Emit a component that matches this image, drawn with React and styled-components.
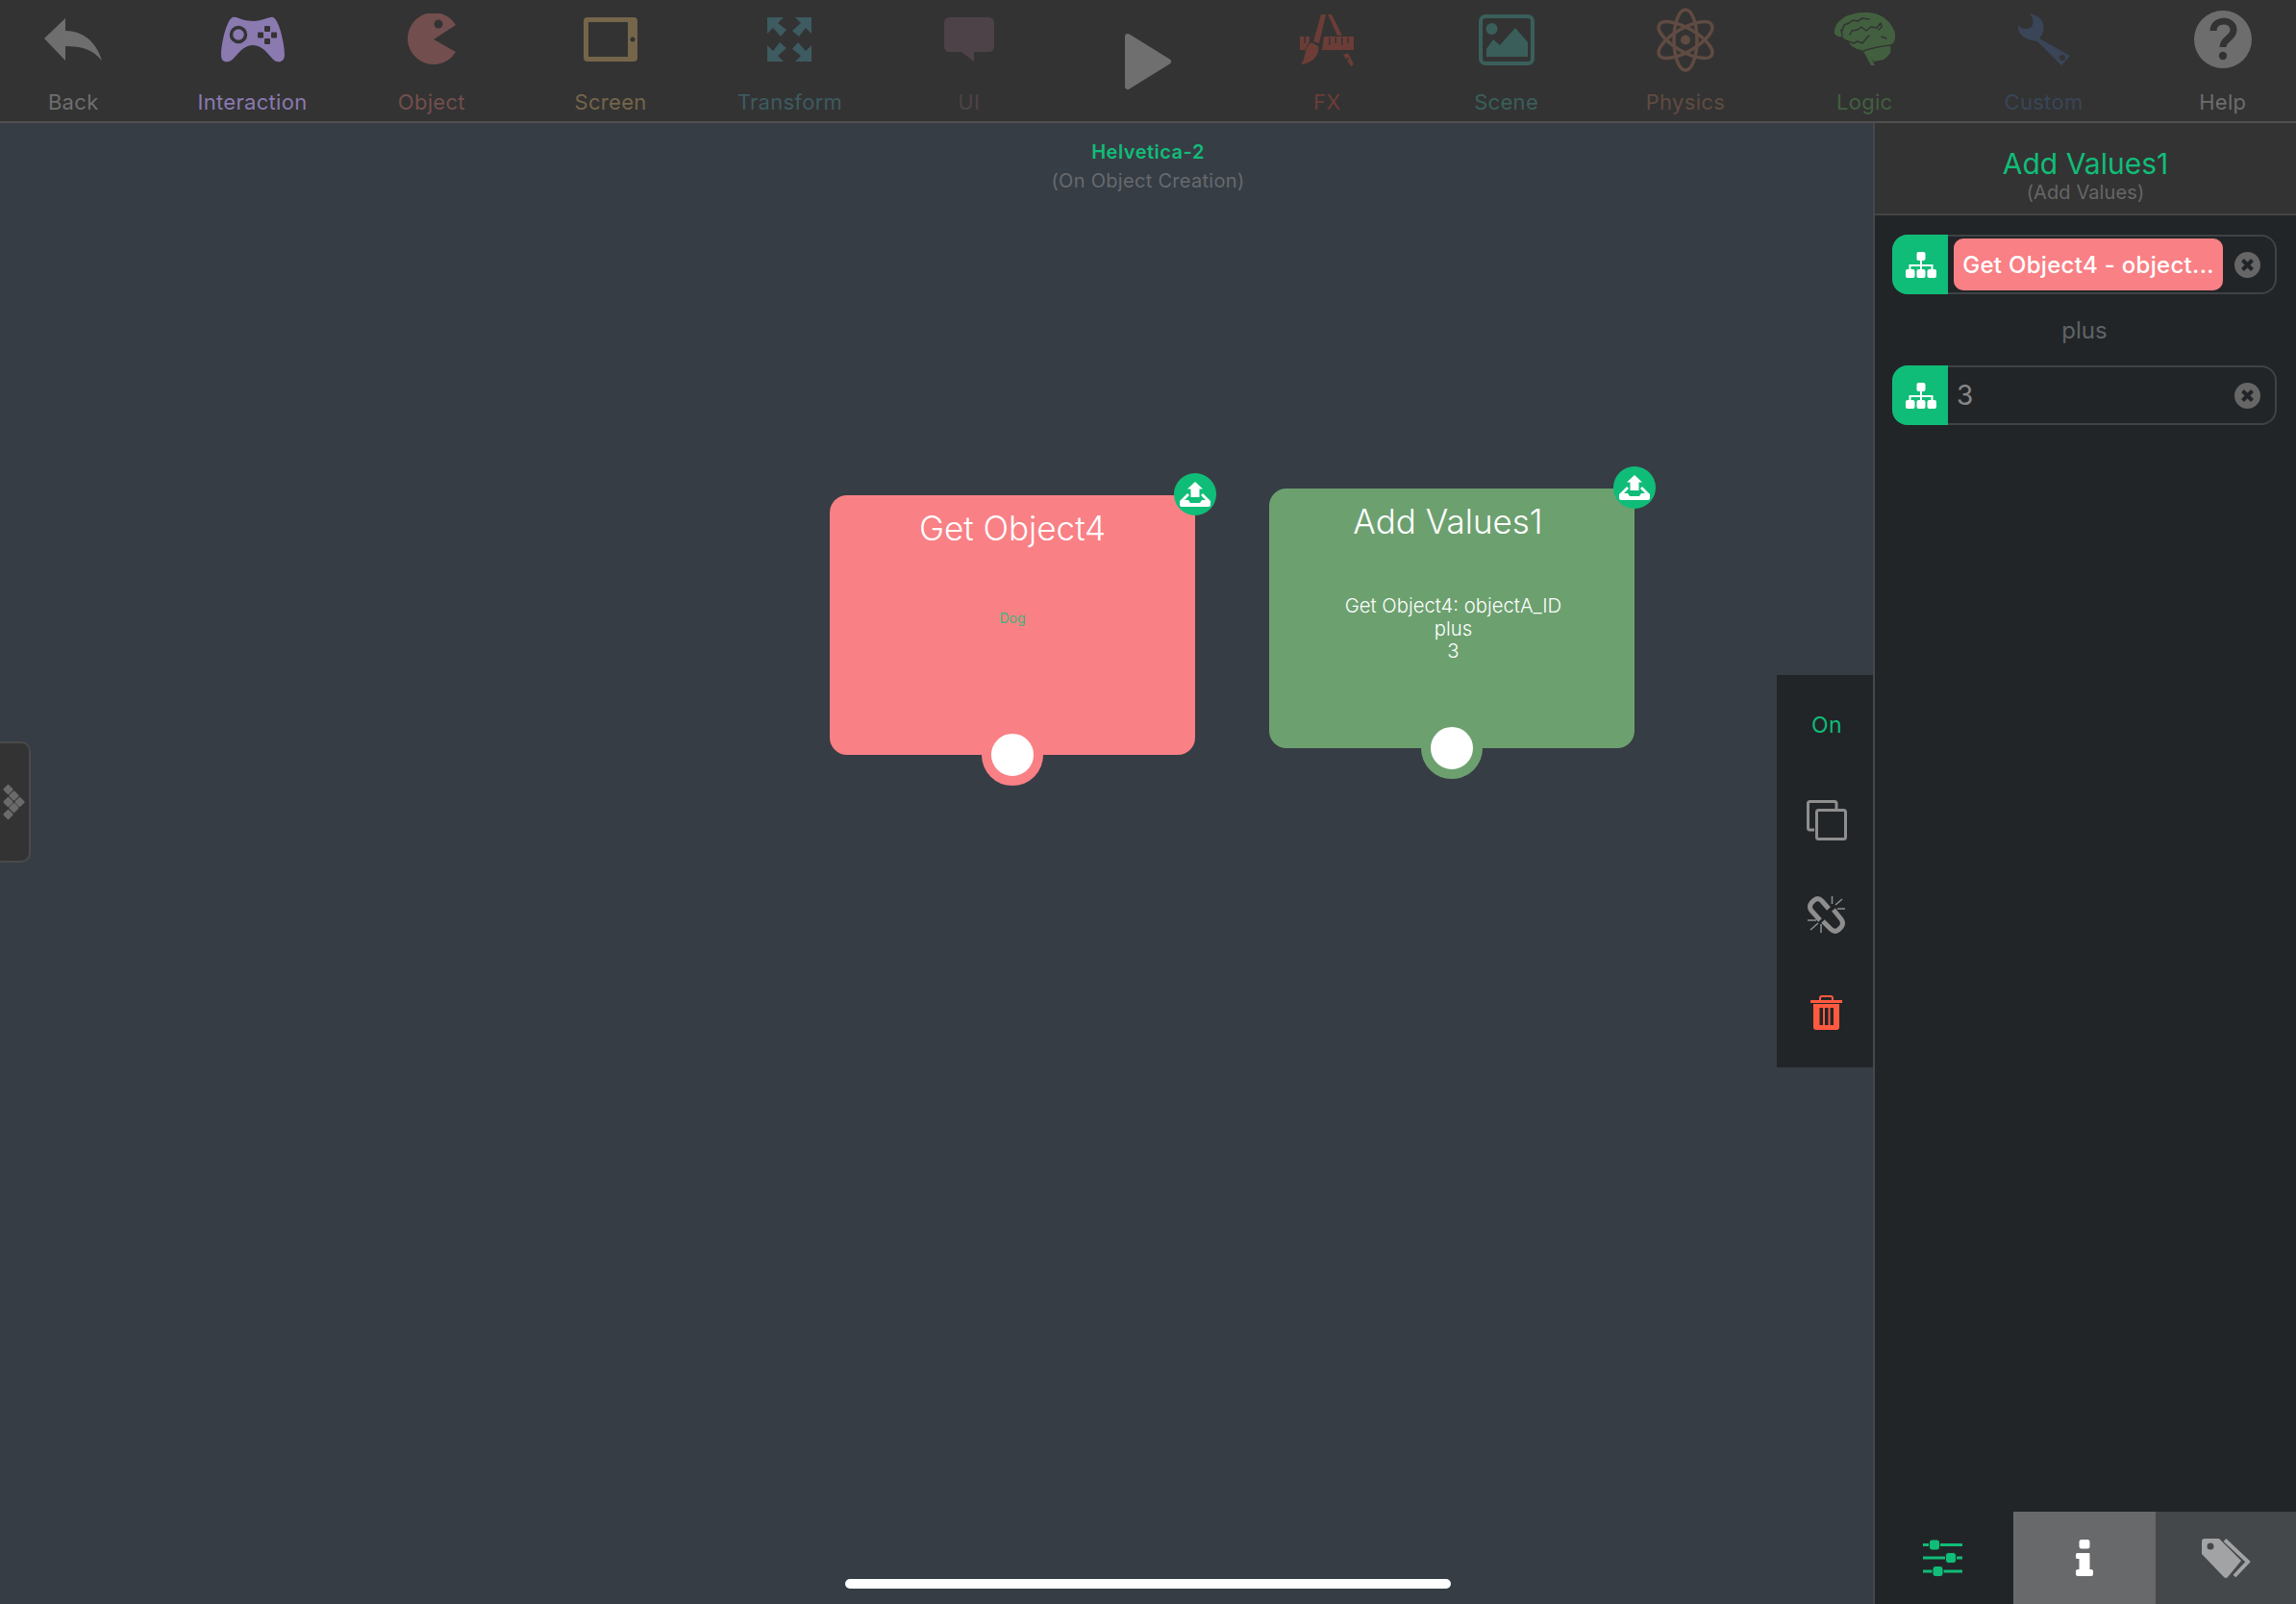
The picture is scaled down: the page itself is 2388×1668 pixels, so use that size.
import React from 'react';
import styled, { createGlobalStyle } from 'styled-components';

const GREEN = '#10bd78';
const PINK = '#f98085';
const NODE_GREEN = '#6ca06f';
const TOOL_BG = '#333333';
const PANEL_BG = '#222528';

const GlobalStyle = createGlobalStyle`
  html, body {
    margin: 0;
    padding: 0;
    background: #373d45;
  }
  * {
    box-sizing: border-box;
  }
`;

const BackIcon = ({ color }) => (
  <svg width="60" height="44" viewBox="0 0 60 44">
    <path fill={color} d="M0 21 L22 0 V13 C40 13 54 24 60 44 C50 32 38 29 22 29 V44 Z" />
  </svg>
);

const GamepadIcon = ({ color }) => (
  <svg width="66" height="48" viewBox="0 0 66 48">
    <path
      fill={color}
      d="M12 1 C16 0 22 5 33 5 C44 5 50 0 54 1 C60 3 66 28 66 40 C66 46 62 48 58 47 C52 46 46 30 33 30 C20 30 14 46 8 47 C3 48 0 46 0 40 C0 28 6 3 12 1 Z"
    />
    <circle cx="18" cy="19" r="7.5" fill={color} stroke={TOOL_BG} strokeWidth="3.5" />
    <rect x="45" y="10" width="6" height="6" rx="1" fill={TOOL_BG} />
    <rect x="38" y="16.5" width="6" height="6" rx="1" fill={TOOL_BG} />
    <rect x="52" y="16.5" width="6" height="6" rx="1" fill={TOOL_BG} />
    <rect x="45" y="23" width="6" height="6" rx="1" fill={TOOL_BG} />
  </svg>
);

const PacmanIcon = ({ color }) => (
  <svg width="50" height="54" viewBox="0 0 50 54">
    <path fill={color} d="M50 12 L27 27 L50 40 A27 27 0 1 1 50 12 Z" />
    <circle cx="32" cy="11" r="4.5" fill={TOOL_BG} />
  </svg>
);

const TabletIcon = ({ color }) => (
  <svg width="56" height="46" viewBox="0 0 56 46">
    <rect width="56" height="46" rx="4" fill={color} />
    <rect x="5" y="5" width="41" height="36" fill={TOOL_BG} />
    <circle cx="51" cy="23" r="2.5" fill={TOOL_BG} />
  </svg>
);

const TransformIcon = ({ color }) => (
  <svg width="48" height="48" viewBox="0 0 48 48">
    {[0, 90, 180, 270].map((angle) => (
      <path
        key={angle}
        fill={color}
        transform={`rotate(${angle} 24 24)`}
        d="M30 1 H47 V18 L41 12 L34 21 L27 15 L36 7 Z"
      />
    ))}
  </svg>
);

const BubbleIcon = ({ color }) => (
  <svg width="52" height="46" viewBox="0 0 52 46">
    <path
      fill={color}
      d="M6 0 H46 Q52 0 52 6 V30 Q52 36 46 36 H31 V46 L18 36 H6 Q0 36 0 30 V6 Q0 0 6 0 Z"
    />
  </svg>
);

const PlayIcon = ({ color }) => (
  <svg width="48" height="58" viewBox="0 0 48 58">
    <path fill={color} stroke={color} strokeWidth="6" strokeLinejoin="round" d="M3 3 L45 29 L3 55 Z" />
  </svg>
);

const FxIcon = ({ color }) => (
  <svg width="56" height="55" viewBox="0 0 56 55">
    <g fill={color}>
      <path d="M22 1 H27 L20 31 L14 29 Z" />
      <path d="M12 30 L19 34 C21 42 14 52 1 53 C7 47 3 36 12 30 Z" />
      <path d="M0 24 H10 V29 L5 38 H0 Z" />
      <path d="M25 24 H56 V38 H23 Z" />
      <path d="M29 1 H33 L44 23 H39 Z" />
      <path d="M45 43 L50 41 L56 53 L53 55 Z" />
    </g>
    <g fill={TOOL_BG}>
      <rect x="4.5" y="24" width="1.5" height="7" />
      <rect x="30" y="25" width="1.5" height="8" />
      <rect x="36.5" y="25" width="1.5" height="6" />
      <rect x="43" y="25" width="1.5" height="8" />
      <rect x="49.5" y="25" width="1.5" height="6" />
      <circle cx="49.5" cy="47.5" r="1.3" />
    </g>
  </svg>
);

const SceneIcon = ({ color }) => (
  <svg width="58" height="53" viewBox="0 0 58 53">
    <rect x="2" y="2" width="54" height="49" rx="5" fill="none" stroke={color} strokeWidth="4" />
    <circle cx="13.5" cy="15" r="6" fill={color} />
    <path fill={color} d="M8 44 V36 L15 26 L22 32 L38 14 L51 29 V44 Z" />
  </svg>
);

const AtomIcon = ({ color }) => (
  <svg width="60" height="67" viewBox="0 0 60 67">
    <circle cx="30" cy="33.5" r="5" fill={color} />
    {[0, 60, -60].map((angle) => (
      <ellipse
        key={angle}
        cx="30"
        cy="33.5"
        rx="12"
        ry="31.5"
        fill="none"
        stroke={color}
        strokeWidth="3.5"
        transform={`rotate(${angle} 30 33.5)`}
      />
    ))}
  </svg>
);

const BrainIcon = ({ color }) => (
  <svg width="64" height="56" viewBox="0 0 64 56">
    <path
      fill={color}
      d="M1 19 Q2 12 6 9 Q12 3 19 2 Q28 -1 37 0 Q46 1 52 5 Q58 9 61 15 Q65 21 64 27 Q63 32 59 34 Q60 39 59 42 Q56 47 52 49 L42 51 L39 47 L43 55 H39 L32 42 L29 39 Q23 38 19 35 Q16 32 15 29 Q11 28 9 25 Q5 26 3 24 Q0 22 1 19 Z"
    />
    <g fill="none" stroke={TOOL_BG} strokeWidth="1.5" strokeLinecap="round" strokeLinejoin="round">
      <path d="M9 19 L11 13 L16 11 L20 8 L25 9 L30 6 L37 7" />
      <path d="M17 23 L19 19 L25 18 L29 15 L34 19 L39 15 L45 16 L49 11 L50 15 L47 18" />
      <path d="M8 18 L9 24" />
      <path d="M15 30 L21 32 L25 30 L30 32 L34 27 L37 24" />
      <path d="M50 25 L55 27" />
      <path d="M31 40 Q42 36 59 34" />
    </g>
  </svg>
);

const WrenchIcon = ({ color }) => (
  <svg width="55" height="54" viewBox="0 0 55 54">
    <path
      fill={color}
      d="M13 0 Q24 2 27 11 Q29 19 23 26 L55 44 L46 54 L21 29 Q12 28 6 24 Q0 19 1 12 Q4 16 8 16 Q14 16 16 12 Q18 6 13 0 Z"
    />
    <circle cx="47" cy="46" r="3" fill={TOOL_BG} />
  </svg>
);

const HelpIcon = ({ color }) => (
  <svg width="60" height="60" viewBox="0 0 60 60">
    <circle cx="30" cy="30" r="30" fill={color} />
    <path
      d="M20 21 C20 8 41 8 41 20 C41 29 30 29 30 38"
      fill="none"
      stroke={TOOL_BG}
      strokeWidth="7"
    />
    <circle cx="30" cy="47" r="4.2" fill={TOOL_BG} />
  </svg>
);

const SitemapIcon = () => (
  <svg width="32" height="27" viewBox="0 0 32 27">
    <g fill="#fff">
      <rect x="11.5" y="0" width="9" height="9" rx="2" />
      <rect x="0" y="18" width="9.5" height="9" rx="2" />
      <rect x="11.5" y="18" width="9" height="9" rx="2" />
      <rect x="22.5" y="18" width="9.5" height="9" rx="2" />
    </g>
    <path d="M16 9 V18 M4.5 18 V14 H27.5 V18" fill="none" stroke="#fff" strokeWidth="2" />
  </svg>
);

const CloseIcon = () => (
  <svg width="27" height="27" viewBox="0 0 27 27">
    <circle cx="13.5" cy="13.5" r="13.5" fill="#666666" />
    <path d="M8.5 8.5 L18.5 18.5 M18.5 8.5 L8.5 18.5" stroke={PANEL_BG} strokeWidth="4" />
  </svg>
);

const UploadIcon = () => (
  <svg width="32" height="26" viewBox="0 0 32 26">
    <path fill="#fff" d="M16 0 L24 7.5 H20.5 V16 H11.5 V7.5 H8 Z" />
    <path
      fill="#fff"
      d="M8 12 L0 20 V24 Q0 26 2 26 H30 Q32 26 32 24 V20 L24 12 L22 14 L27 19 H23 L21 22 H11 L9 19 H5 L10 14 Z"
    />
  </svg>
);

const CopyIcon = () => (
  <svg width="42" height="42" viewBox="0 0 42 42">
    <g fill="none" stroke="#8e8e8e" strokeWidth="3">
      <path d="M8 31 H3.5 Q1.5 31 1.5 29 V3.5 Q1.5 1.5 3.5 1.5 H29 Q31 1.5 31 3.5 V9" />
      <rect x="10.5" y="10.5" width="30" height="30" rx="2" />
    </g>
  </svg>
);

const UnlinkIcon = () => (
  <svg width="40" height="39" viewBox="0 0 40 39">
    <g fill="none" stroke="#8e8e8e">
      <path strokeWidth="5" d="M22 13 L15 5 Q11 1 7 4 L4 7 Q1 11 4 15 L13 25" />
      <path strokeWidth="5" d="M16 26 L24 34 Q28 38 32 35 L35 32 Q38 28 35 24 L27 14" />
      <path
        strokeWidth="1.5"
        d="M25.5 0 V8 M36 3 L29 9 M39 13 H31 M0 25 H9 M3 35 L11 28 M14 29 V38"
      />
    </g>
  </svg>
);

const TrashIcon = () => (
  <svg width="33" height="36" viewBox="0 0 33 36">
    <path d="M10 6 V3 Q10 1 12 1 H21 Q23 1 23 3 V6" fill="none" stroke="#ff5a3f" strokeWidth="2" />
    <rect x="0" y="5" width="33" height="3" fill="#ff5a3f" />
    <path fill="#ff5a3f" d="M3 9 H30 V33 Q30 36 27 36 H6 Q3 36 3 33 Z" />
    <g fill={PANEL_BG}>
      <rect x="9.5" y="13" width="3.5" height="18" />
      <rect x="15" y="13" width="3.5" height="18" />
      <rect x="20.5" y="13" width="3.5" height="18" />
    </g>
  </svg>
);

const SlidersIcon = () => (
  <svg width="41" height="38" viewBox="0 0 41 38">
    <path d="M0 5.5 H41 M0 19 H41 M0 33 H41" stroke={GREEN} strokeWidth="3" />
    <g fill={GREEN} stroke={PANEL_BG} strokeWidth="1">
      <rect x="6.5" y="0" width="11" height="11" rx="3" />
      <rect x="23.5" y="13.5" width="11" height="11" rx="3" />
      <rect x="10" y="27.5" width="11" height="11" rx="3" />
    </g>
  </svg>
);

const InfoIcon = () => (
  <svg width="18" height="38" viewBox="0 0 18 38">
    <g fill="#fff">
      <rect x="3.5" y="0" width="11" height="9.5" rx="2.5" />
      <rect x="0" y="14" width="14" height="6" rx="1.5" />
      <rect x="3.5" y="14" width="11" height="24" rx="1" />
      <rect x="0" y="31" width="18" height="7" rx="2" />
    </g>
  </svg>
);

const TagsIcon = () => (
  <svg width="51" height="41" viewBox="0 0 51 41">
    <path
      fill="#a2a3a5"
      d="M0 3 Q0 0 3 0 H18 L41 23 L27 40 Q25 42 23 40 L0 16 Z"
    />
    <circle cx="9" cy="8" r="3.5" fill="#45484b" />
    <path d="M24 1.5 L48 24 L34 39" fill="none" stroke="#a2a3a5" strokeWidth="4" />
  </svg>
);

const GripIcon = () => (
  <svg width="24" height="38" viewBox="0 0 24 38">
    <g fill="#6a6a6a">
      {[
        [6.5, 6],
        [12.5, 12.5],
        [18.5, 19],
        [6.5, 19],
        [12.5, 25],
        [6.5, 32],
      ].map(([x, y]) => (
        <rect
          key={`${x}-${y}`}
          x={x - 4}
          y={y - 4}
          width="8"
          height="8"
          rx="1.5"
          transform={`rotate(45 ${x} ${y})`}
        />
      ))}
    </g>
  </svg>
);

const TOOLS = [
  { label: 'Back', color: '#6e6e6e', Icon: BackIcon },
  { label: 'Interaction', color: '#8a7ab0', Icon: GamepadIcon },
  { label: 'Object', color: '#734e4e', Icon: PacmanIcon },
  { label: 'Screen', color: '#75654a', Icon: TabletIcon },
  { label: 'Transform', color: '#3d5b60', Icon: TransformIcon },
  { label: 'UI', color: '#4d4247', Icon: BubbleIcon },
  { label: '', color: '#6f6f6f', Icon: PlayIcon },
  { label: 'FX', color: '#6b3d36', Icon: FxIcon },
  { label: 'Scene', color: '#3a5f5b', Icon: SceneIcon },
  { label: 'Physics', color: '#604b42', Icon: AtomIcon },
  { label: 'Logic', color: '#42603f', Icon: BrainIcon },
  { label: 'Custom', color: '#3a4558', Icon: WrenchIcon },
  { label: 'Help', color: '#6d6d6d', Icon: HelpIcon },
];

const App = () => (
  <Page>
    <GlobalStyle />
    <Toolbar>
      {TOOLS.map(({ label, color, Icon }) => (
        <ToolItem key={label || 'play'} $color={color}>
          <ToolIcon $play={!label}>
            <Icon color={color} />
          </ToolIcon>
          {label && <ToolLabel>{label}</ToolLabel>}
        </ToolItem>
      ))}
    </Toolbar>
    <Main>
      <Canvas>
        <SceneCaption>
          <SceneName>Helvetica-2</SceneName>
          <SceneEvent>(On Object Creation)</SceneEvent>
        </SceneCaption>

        <DrawerTab>
          <GripIcon />
        </DrawerTab>

        <Node $x={863} $y={387} $color={PINK}>
          <NodeTitle>Get Object4</NodeTitle>
          <NodeTarget>Dog</NodeTarget>
          <NodeBadge>
            <UploadIcon />
          </NodeBadge>
          <NodeKnob $color={PINK} />
        </Node>

        <Node $x={1320} $y={380} $color={NODE_GREEN}>
          <NodeTitle $shift={-8}>Add Values1</NodeTitle>
          <NodeBody>
            Get Object4: objectA_ID
            <br />
            plus
            <br />3
          </NodeBody>
          <NodeBadge>
            <UploadIcon />
          </NodeBadge>
          <NodeKnob $color={NODE_GREEN} />
        </Node>

        <ActionRail>
          <RailItem>
            <RailToggle>On</RailToggle>
          </RailItem>
          <RailItem>
            <CopyIcon />
          </RailItem>
          <RailItem>
            <UnlinkIcon />
          </RailItem>
          <RailItem>
            <TrashIcon />
          </RailItem>
        </ActionRail>

        <HomeIndicator />
      </Canvas>

      <Inspector>
        <InspectorHeader>
          <InspectorTitle>Add Values1</InspectorTitle>
          <InspectorSubtitle>(Add Values)</InspectorSubtitle>
        </InspectorHeader>
        <InspectorBody>
          <ValueRow>
            <ValueIcon>
              <SitemapIcon />
            </ValueIcon>
            <ValueContent>
              <ValueChip>Get Object4 - object...</ValueChip>
            </ValueContent>
            <ClearSlot>
              <CloseIcon />
            </ClearSlot>
          </ValueRow>
          <Operator>plus</Operator>
          <ValueRow>
            <ValueIcon>
              <SitemapIcon />
            </ValueIcon>
            <ValueContent>
              <ValueText>3</ValueText>
            </ValueContent>
            <ClearSlot>
              <CloseIcon />
            </ClearSlot>
          </ValueRow>
        </InspectorBody>
        <TabBar>
          <Tab $bg={PANEL_BG} $nudge={3}>
            <SlidersIcon />
          </Tab>
          <Tab $bg="#68696b">
            <InfoIcon />
          </Tab>
          <Tab $bg="#45484b">
            <TagsIcon />
          </Tab>
        </TabBar>
      </Inspector>
    </Main>
  </Page>
);

export default App;

const Page = styled.div`
  width: 2388px;
  height: 1668px;
  display: flex;
  flex-direction: column;
  overflow: hidden;
  font-family: Inter, "Liberation Sans", sans-serif;
`;

const Toolbar = styled.div`
  height: 128px;
  flex: none;
  display: flex;
  justify-content: center;
  background: ${TOOL_BG};
  border-bottom: 2px solid #505050;
`;

const ToolItem = styled.div`
  flex: 0 0 186.3px;
  display: flex;
  flex-direction: column;
  align-items: center;
  color: ${(p) => p.$color};
`;

const ToolIcon = styled.div`
  height: ${(p) => (p.$play ? '128px' : '82px')};
  flex: none;
  display: flex;
  align-items: center;
  justify-content: center;
`;

const ToolLabel = styled.span`
  margin-top: 10px;
  font-size: 22px;
  line-height: 28px;
  letter-spacing: 0.3px;
  white-space: nowrap;
`;

const Main = styled.div`
  flex: 1;
  display: flex;
  min-height: 0;
`;

const Canvas = styled.div`
  flex: 1;
  position: relative;
  background: #373d45;
`;

const SceneCaption = styled.div`
  position: absolute;
  left: 1194px;
  top: 17px;
  transform: translateX(-50%);
  display: flex;
  flex-direction: column;
  align-items: center;
  white-space: nowrap;
`;

const SceneName = styled.span`
  font-size: 20px;
  line-height: 26px;
  font-weight: 600;
  letter-spacing: 0.5px;
  color: ${GREEN};
`;

const SceneEvent = styled.span`
  margin-top: 4px;
  font-size: 20px;
  line-height: 26px;
  letter-spacing: 0.3px;
  color: #666a6e;
`;

const DrawerTab = styled.div`
  position: absolute;
  left: -8px;
  top: 643px;
  width: 40px;
  height: 126px;
  display: flex;
  align-items: center;
  padding-left: 8px;
  background: ${TOOL_BG};
  border: 2px solid #4a4a4a;
  border-radius: 10px;
`;

const Node = styled.div`
  position: absolute;
  left: ${(p) => p.$x}px;
  top: ${(p) => p.$y}px;
  width: 380px;
  height: 269.5px;
  display: flex;
  flex-direction: column;
  align-items: center;
  padding-top: 14px;
  border-radius: 18px;
  background: ${(p) => p.$color};
  color: #fff;
`;

const NodeTitle = styled.div`
  font-size: 35px;
  font-weight: 300;
  line-height: 40px;
  white-space: nowrap;
  margin-left: ${(p) => p.$shift || 0}px;
`;

const NodeTarget = styled.div`
  margin-top: 65px;
  font-size: 14px;
  line-height: 18px;
  color: #3cb67e;
`;

const NodeBody = styled.div`
  margin-top: 56px;
  margin-left: 3px;
  font-size: 20.3px;
  font-weight: 300;
  line-height: 23.5px;
  text-align: center;
  white-space: nowrap;
`;

const NodeBadge = styled.div`
  position: absolute;
  right: -22px;
  top: -23px;
  width: 44px;
  height: 44px;
  display: flex;
  align-items: center;
  justify-content: center;
  border-radius: 50%;
  background: ${GREEN};
`;

const NodeKnob = styled.div`
  position: absolute;
  left: 158px;
  bottom: -32px;
  width: 64px;
  height: 64px;
  border-radius: 50%;
  background: #fff;
  border: 10px solid ${(p) => p.$color};
`;

const ActionRail = styled.div`
  position: absolute;
  right: 0;
  top: 574px;
  width: 100px;
  height: 408px;
  padding-top: 2px;
  background: ${PANEL_BG};
`;

const RailItem = styled.div`
  height: 99px;
  display: flex;
  align-items: center;
  justify-content: center;
  padding-left: 4px;

  &:last-child {
    padding-top: 4px;
    padding-left: 3px;
  }
`;

const RailToggle = styled.span`
  font-size: 23px;
  letter-spacing: 0.4px;
  color: ${GREEN};
`;

const HomeIndicator = styled.div`
  position: absolute;
  left: 879px;
  bottom: 16px;
  width: 630px;
  height: 10px;
  border-radius: 5px;
  background: #fff;
`;

const Inspector = styled.div`
  flex: 0 0 440px;
  display: flex;
  flex-direction: column;
  background: ${PANEL_BG};
  border-left: 2px solid #45494d;
`;

const InspectorHeader = styled.div`
  height: 96px;
  flex: none;
  display: flex;
  flex-direction: column;
  align-items: center;
  padding-top: 24px;
  background: ${TOOL_BG};
  border-bottom: 2px solid #444444;
`;

const InspectorTitle = styled.div`
  font-size: 30px;
  line-height: 36px;
  color: ${GREEN};
`;

const InspectorSubtitle = styled.div`
  font-size: 20px;
  line-height: 24px;
  letter-spacing: 0.1px;
  color: #666666;
`;

const InspectorBody = styled.div`
  flex: 1;
  display: flex;
  flex-direction: column;
  padding: 20px 20px 0 18px;
`;

const ValueRow = styled.div`
  height: 62px;
  display: flex;
  align-items: center;
  border: 2px solid #404346;
  border-radius: 16px;
`;

const ValueIcon = styled.div`
  align-self: stretch;
  flex: 0 0 58px;
  margin: -2px 0 -2px -2px;
  padding-left: 2px;
  display: flex;
  align-items: center;
  justify-content: center;
  background: ${GREEN};
  border-radius: 16px 0 0 16px;
`;

const ValueContent = styled.div`
  flex: 1;
  min-width: 0;
  padding-left: 6px;
`;

const ValueChip = styled.div`
  height: 54px;
  display: flex;
  align-items: center;
  justify-content: center;
  border-radius: 10px;
  background: ${PINK};
  font-size: 24px;
  font-weight: 500;
  letter-spacing: 0.3px;
  color: #fff;
  white-space: nowrap;
`;

const ValueText = styled.span`
  padding-left: 3px;
  font-size: 28px;
  color: #888888;
`;

const ClearSlot = styled.div`
  flex: 0 0 54px;
  padding-right: 3px;
  display: flex;
  align-items: center;
  justify-content: center;
`;

const Operator = styled.div`
  height: 74px;
  display: flex;
  align-items: center;
  justify-content: center;
  font-size: 24px;
  color: #606366;
`;

const TabBar = styled.div`
  height: 96px;
  flex: none;
  display: grid;
  grid-template-columns: 144px 148px 1fr;
`;

const Tab = styled.div`
  display: flex;
  align-items: center;
  justify-content: center;
  padding-right: ${(p) => p.$nudge || 0}px;
  background: ${(p) => p.$bg};
`;
